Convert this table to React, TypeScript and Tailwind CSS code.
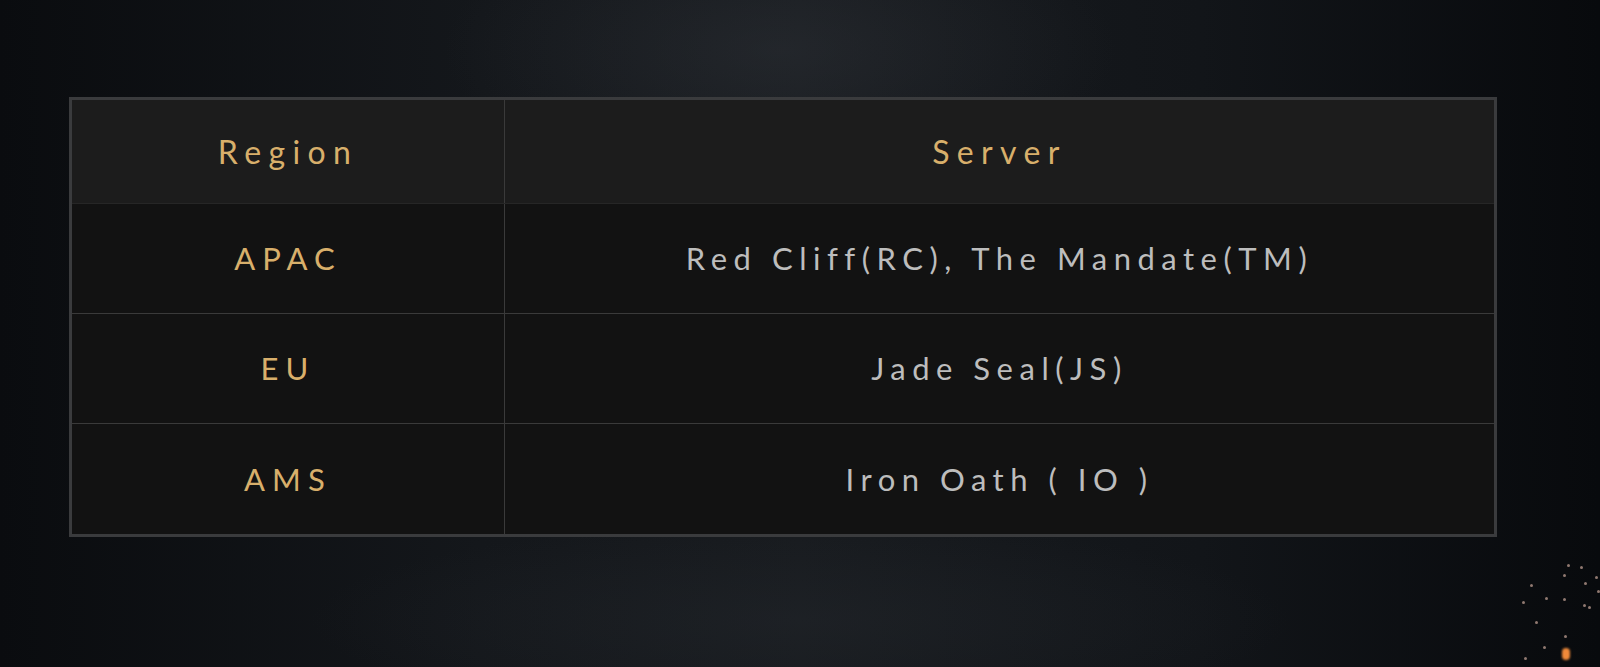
const rows = [
  { region: 'APAC', server: 'Red Cliff(RC), The Mandate(TM)' },
  { region: 'EU', server: 'Jade Seal(JS)' },
  { region: 'AMS', server: 'Iron Oath ( IO )' },
];

const embers = [
  [1567, 564], [1580, 566], [1563, 574], [1595, 576], [1530, 584], [1545, 597], [1563, 598], [1522, 601],
  [1583, 604], [1588, 606], [1535, 621], [1564, 635], [1543, 646], [1524, 657], [1597, 590], [1584, 582],
];

export default function App() {
  return (
    <div
      className="relative w-[1600px] h-[667px] overflow-hidden bg-[#0f1215] pt-[97px] pl-[69px]"
      style={{
        backgroundImage:
          'radial-gradient(ellipse 480px 200px at 780px 50px, rgba(48,52,58,0.45), transparent 70%), radial-gradient(ellipse 700px 140px at 800px 620px, rgba(34,38,43,0.5), transparent 70%), linear-gradient(90deg, #0a0c0f 0%, #14171b 30%, #181b1f 50%, #121519 75%, #080a0d 100%)',
      }}
    >
      <div className="w-[1428px] border-[3px] border-[#3a3b3d] bg-[#121212] font-['Lato','Liberation_Sans',sans-serif]">
        <div className="flex h-[104px] bg-[#1c1c1c] border-b border-[#262626]">
          <div className="w-[433px] flex items-center justify-center border-r border-[#3a3a3a] text-[32px] tracking-[0.23em] text-[#d8af6b]">
            Region
          </div>
          <div className="flex-1 flex items-center justify-center text-[32px] tracking-[0.23em] text-[#d8af6b]">
            Server
          </div>
        </div>
        {rows.map((row, i) => (
          <div
            key={row.region}
            className={`flex h-[110px] ${i < rows.length - 1 ? 'border-b border-[#3a3a3a]' : ''}`}
          >
            <div className="w-[433px] flex items-center justify-center border-r border-[#3a3a3a] text-[31px] tracking-[0.23em] text-[#d8af6b]">
              {row.region}
            </div>
            <div className="flex-1 flex items-center justify-center text-[31px] tracking-[0.21em] text-[#bdbdbd]">
              {row.server}
            </div>
          </div>
        ))}
      </div>

      {embers.map(([x, y], i) => (
        <span
          key={i}
          className="absolute w-[3px] h-[3px] rounded-full bg-[#c9a79a] opacity-70"
          style={{ left: x, top: y }}
        />
      ))}
      <span className="absolute left-[1562px] top-[648px] w-[8px] h-[12px] rounded-full bg-[#f08a3a] blur-[1px]" />
    </div>
  );
}
